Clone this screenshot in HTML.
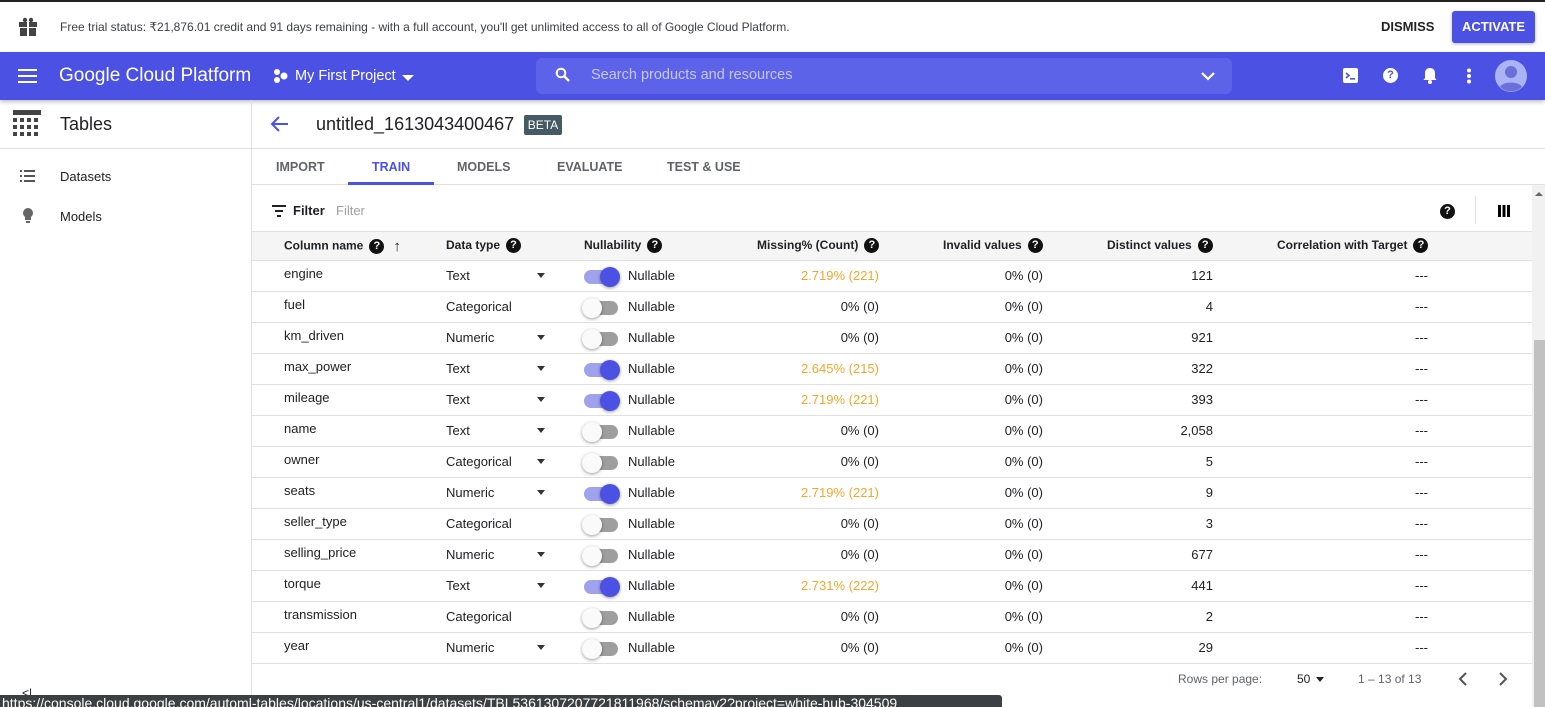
<!DOCTYPE html>
<html><head><meta charset="utf-8"><style>
*{box-sizing:border-box;margin:0;padding:0}
body{width:1545px;height:707px;overflow:hidden;font-family:"Liberation Sans",Arial,sans-serif;background:#fff;position:relative;color:#202124}
.abs{position:absolute}
.top{left:0;top:0;width:1545px;height:52px;border-top:2px solid #222;background:#fff}
.blue{left:0;top:52px;width:1545px;height:48px;background:#4a51e3;box-shadow:0 2px 4px rgba(0,0,0,.25)}
.w{color:#fff}
.hq{display:inline-block;width:15px;height:15px;border-radius:50%;background:#111;color:#fff;font-size:11px;font-weight:bold;text-align:center;line-height:15px;vertical-align:middle;margin-left:6px}
.row{position:absolute;left:252px;width:1280px;height:31px;border-bottom:1px solid #e0e0e0;font-size:13px}
.row span{position:absolute;top:7px}
.row .hd span{position:static}
.r{text-align:right}
.tog{position:absolute;left:332px;top:9px;width:34px;height:14px;border-radius:7px;background:#9e9e9e}
.tog i{position:absolute;left:-2px;top:-3px;width:20px;height:20px;border-radius:50%;background:#fafafa;box-shadow:0 1px 3px rgba(0,0,0,.4)}
.tog.on{background:#9fa3ee}.tog.on i{left:16px;background:#4a51e3}
.dd{position:absolute;left:285px;top:12px;border-left:4px solid transparent;border-right:4px solid transparent;border-top:5px solid #333}
.or{color:#f4a62a}
.hd{font-size:12px;font-weight:bold;position:absolute;top:6px;white-space:nowrap}
</style></head><body>
<div class="abs top">
 <svg class="abs" style="left:18px;top:15px" width="20" height="20" viewBox="0 0 20 20"><rect x="1" y="5" width="18" height="5" fill="#444"/><rect x="2" y="11" width="16" height="8" fill="#444"/><rect x="9" y="5" width="2" height="14" fill="#fff"/><circle cx="7" cy="3" r="2.2" fill="#444"/><circle cx="13" cy="3" r="2.2" fill="#444"/></svg>
 <div class="abs" style="left:60px;top:18px;font-size:12px;color:#3c4043">Free trial status: ₹21,876.01 credit and 91 days remaining - with a full account, you'll get unlimited access to all of Google Cloud Platform.</div>
 <div class="abs" style="left:1381px;top:17px;font-size:13px;font-weight:bold;color:#222">DISMISS</div>
 <div class="abs" style="left:1452px;top:9px;width:83px;height:32px;background:#4a51e3;color:#fff;border-radius:3px;font-size:13px;font-weight:bold;text-align:center;line-height:32px;box-shadow:0 1px 3px rgba(0,0,0,.3)">ACTIVATE</div>
</div>
<div class="abs blue">
 <svg class="abs" style="left:18px;top:16px" width="20" height="16"><rect y="1" width="19" height="2" fill="#fff"/><rect y="7" width="19" height="2" fill="#fff"/><rect y="13" width="19" height="2" fill="#fff"/></svg>
 <div class="abs w" style="left:59px;top:13px;font-size:19px">Google Cloud Platform</div>
 <svg class="abs" style="left:273px;top:16px" width="16" height="16"><circle cx="4" cy="4" r="3" fill="#fff"/><circle cx="4" cy="12" r="3" fill="#fff"/><circle cx="11" cy="8" r="3.5" fill="#fff"/></svg>
 <div class="abs w" style="left:295px;top:16px;font-size:14.5px">My First Project</div>
 <div class="abs" style="left:402px;top:23px;border-left:6px solid transparent;border-right:6px solid transparent;border-top:6px solid #fff"></div>
 <div class="abs" style="left:536px;top:6px;width:696px;height:36px;border-radius:6px;background:#5c63e8"></div>
 <svg class="abs" style="left:555px;top:15px" width="16" height="16"><circle cx="6" cy="6" r="4.3" stroke="#fff" stroke-width="2" fill="none"/><path d="M9 9l5 5" stroke="#fff" stroke-width="2.4"/></svg>
 <div class="abs" style="left:591px;top:15px;font-size:14.5px;color:#c5c8f5">Search products and resources</div>
 <svg class="abs" style="left:1200px;top:18px" width="16" height="12"><path d="M2 3l6 6 6-6" stroke="#fff" stroke-width="2.2" fill="none"/></svg>
 <svg class="abs" style="left:1343px;top:16px" width="16" height="16"><rect width="15" height="15" rx="2" fill="#fff"/><path d="M3 5l3 2.5-3 2.5" stroke="#4a51e3" stroke-width="1.6" fill="none"/><rect x="7" y="10" width="5" height="1.6" fill="#4a51e3"/></svg>
 <div class="abs" style="left:1383px;top:16px;width:15px;height:15px;border-radius:50%;background:#fff;color:#4a51e3;font-size:11px;font-weight:bold;text-align:center;line-height:15px">?</div>
 <svg class="abs" style="left:1423px;top:15px" width="14" height="18"><path d="M7 1c-3 0-5 2-5 5v5l-1.5 2h13L12 11V6c0-3-2-5-5-5z" fill="#fff"/><circle cx="7" cy="15" r="2" fill="#fff"/></svg>
 <svg class="abs" style="left:1466px;top:16px" width="6" height="16"><circle cx="3" cy="2.5" r="2" fill="#fff"/><circle cx="3" cy="8" r="2" fill="#fff"/><circle cx="3" cy="13.5" r="2" fill="#fff"/></svg>
 <svg class="abs" style="left:1495px;top:8px" width="32" height="32"><circle cx="16" cy="16" r="16" fill="#aab4f5"/><circle cx="16" cy="12" r="6" fill="#6a70d8"/><path d="M5 27c3-6 19-6 22 0a16 16 0 0 1-22 0z" fill="#6a70d8"/></svg>
</div>
<div class="abs" style="left:251px;top:100px;width:1px;height:607px;background:#e0e0e0"></div>
<div class="abs" style="left:0;top:148px;width:1545px;height:1px;background:#e0e0e0"></div>
<svg class="abs" style="left:12px;top:109px" width="30" height="30"><rect x="1" y="1" width="28" height="5" fill="#444"/><g fill="#444"><rect x="1" y="9" width="4" height="4"/><rect x="8" y="9" width="4" height="4"/><rect x="15" y="9" width="4" height="4"/><rect x="22" y="9" width="4" height="4"/><rect x="1" y="16" width="4" height="4"/><rect x="8" y="16" width="4" height="4"/><rect x="15" y="16" width="4" height="4"/><rect x="22" y="16" width="4" height="4"/><rect x="1" y="23" width="4" height="4"/><rect x="8" y="23" width="4" height="4"/><rect x="15" y="23" width="4" height="4"/><rect x="22" y="23" width="4" height="4"/></g></svg>
<div class="abs" style="left:60px;top:114px;font-size:18px">Tables</div>
<svg class="abs" style="left:20px;top:170px" width="16" height="13"><g fill="#555"><rect y="0" width="2" height="2"/><rect y="5" width="2" height="2"/><rect y="10" width="2" height="2"/><rect x="4" y="0" width="11" height="2"/><rect x="4" y="5" width="11" height="2"/><rect x="4" y="10" width="11" height="2"/></g></svg>
<div class="abs" style="left:60px;top:169px;font-size:13px">Datasets</div>
<svg class="abs" style="left:22px;top:208px" width="12" height="16"><circle cx="6" cy="5" r="5" fill="#666"/><rect x="3" y="7" width="6" height="5" fill="#666"/><rect x="4" y="13" width="4" height="2" fill="#666"/></svg>
<div class="abs" style="left:60px;top:209px;font-size:13px">Models</div>
<div class="abs" style="left:22px;top:686px;font-size:12px">&lt;|</div>
<svg class="abs" style="left:270px;top:115px" width="20" height="18"><path d="M18 9H3M9 2L2 9l7 7" stroke="#4a51e3" stroke-width="2" fill="none"/></svg>
<div class="abs" style="left:316px;top:114px;font-size:18px">untitled_1613043400467</div>
<div class="abs" style="left:524px;top:115px;width:38px;height:20px;background:#455a64;color:#fff;font-size:12px;text-align:center;line-height:20px;border-radius:2px">BETA</div>
<div class="abs" style="left:252px;top:184px;width:1293px;height:1px;background:#e0e0e0"></div>
<div class="abs" style="left:276px;top:160px;font-size:12.5px;font-weight:bold;color:#5f6368">IMPORT</div>
<div class="abs" style="left:372px;top:160px;font-size:12.5px;font-weight:bold;color:#4a51e3">TRAIN</div>
<div class="abs" style="left:348px;top:182px;width:86px;height:3px;background:#4a51e3"></div>
<div class="abs" style="left:457px;top:160px;font-size:12.5px;font-weight:bold;color:#5f6368">MODELS</div>
<div class="abs" style="left:557px;top:160px;font-size:12.5px;font-weight:bold;color:#5f6368">EVALUATE</div>
<div class="abs" style="left:667px;top:160px;font-size:12.5px;font-weight:bold;color:#5f6368">TEST &amp; USE</div>
<svg class="abs" style="left:272px;top:205px" width="14" height="12"><rect width="14" height="2" fill="#222"/><rect x="3" y="5" width="8" height="2" fill="#222"/><rect x="5" y="10" width="4" height="2" fill="#222"/></svg>
<div class="abs" style="left:293px;top:203px;font-size:13px;font-weight:bold">Filter</div>
<div class="abs" style="left:336px;top:203px;font-size:13px;color:#9e9e9e">Filter</div>
<div class="abs" style="left:1440px;top:203px"><span class="hq" style="margin:0">?</span></div>
<div class="abs" style="left:1475px;top:196px;width:1px;height:28px;background:#e0e0e0"></div>
<svg class="abs" style="left:1498px;top:205px" width="12" height="12"><rect width="3" height="12"/><rect x="4.5" width="3" height="12"/><rect x="9" width="3" height="12"/></svg>
<div class="abs" style="left:1532px;top:185px;width:13px;height:522px;background:#f1f1f1"></div>
<div class="abs" style="left:1534px;top:340px;width:11px;height:367px;background:#c1c1c1"></div>
<div class="abs" style="left:1535px;top:192px;border-left:4px solid transparent;border-right:4px solid transparent;border-bottom:4px solid #666"></div>
<div class="row" style="top:231px;height:30px;background:#f5f5f5;border-top:1px solid #e0e0e0">
 <div class="hd" style="left:32px">Column name<span class="hq">?</span><span style="margin-left:9px;font-size:15px;vertical-align:middle">↑</span></div>
 <div class="hd" style="left:194px">Data type<span class="hq">?</span></div>
 <div class="hd" style="left:332px">Nullability<span class="hq">?</span></div>
 <div class="hd" style="left:505px">Missing% (Count)<span class="hq">?</span></div>
 <div class="hd" style="left:691px">Invalid values<span class="hq">?</span></div>
 <div class="hd" style="left:855px">Distinct values<span class="hq">?</span></div>
 <div class="hd" style="left:1025px">Correlation with Target<span class="hq">?</span></div>
</div>
<div class="row" style="top:261px"><span style="left:32px;top:5px">engine</span><span style="left:194px">Text</span><i class="dd"></i><div class="tog on"><i></i></div><span style="left:376px">Nullable</span><span class="r or" style="right:653px">2.719% (221)</span><span class="r" style="right:489px">0% (0)</span><span class="r" style="right:319px">121</span><span style="left:1163px">---</span></div>
<div class="row" style="top:292px"><span style="left:32px;top:5px">fuel</span><span style="left:194px">Categorical</span><div class="tog"><i></i></div><span style="left:376px">Nullable</span><span class="r" style="right:653px">0% (0)</span><span class="r" style="right:489px">0% (0)</span><span class="r" style="right:319px">4</span><span style="left:1163px">---</span></div>
<div class="row" style="top:323px"><span style="left:32px;top:5px">km_driven</span><span style="left:194px">Numeric</span><i class="dd"></i><div class="tog"><i></i></div><span style="left:376px">Nullable</span><span class="r" style="right:653px">0% (0)</span><span class="r" style="right:489px">0% (0)</span><span class="r" style="right:319px">921</span><span style="left:1163px">---</span></div>
<div class="row" style="top:354px"><span style="left:32px;top:5px">max_power</span><span style="left:194px">Text</span><i class="dd"></i><div class="tog on"><i></i></div><span style="left:376px">Nullable</span><span class="r or" style="right:653px">2.645% (215)</span><span class="r" style="right:489px">0% (0)</span><span class="r" style="right:319px">322</span><span style="left:1163px">---</span></div>
<div class="row" style="top:385px"><span style="left:32px;top:5px">mileage</span><span style="left:194px">Text</span><i class="dd"></i><div class="tog on"><i></i></div><span style="left:376px">Nullable</span><span class="r or" style="right:653px">2.719% (221)</span><span class="r" style="right:489px">0% (0)</span><span class="r" style="right:319px">393</span><span style="left:1163px">---</span></div>
<div class="row" style="top:416px"><span style="left:32px;top:5px">name</span><span style="left:194px">Text</span><i class="dd"></i><div class="tog"><i></i></div><span style="left:376px">Nullable</span><span class="r" style="right:653px">0% (0)</span><span class="r" style="right:489px">0% (0)</span><span class="r" style="right:319px">2,058</span><span style="left:1163px">---</span></div>
<div class="row" style="top:447px"><span style="left:32px;top:5px">owner</span><span style="left:194px">Categorical</span><i class="dd"></i><div class="tog"><i></i></div><span style="left:376px">Nullable</span><span class="r" style="right:653px">0% (0)</span><span class="r" style="right:489px">0% (0)</span><span class="r" style="right:319px">5</span><span style="left:1163px">---</span></div>
<div class="row" style="top:478px"><span style="left:32px;top:5px">seats</span><span style="left:194px">Numeric</span><i class="dd"></i><div class="tog on"><i></i></div><span style="left:376px">Nullable</span><span class="r or" style="right:653px">2.719% (221)</span><span class="r" style="right:489px">0% (0)</span><span class="r" style="right:319px">9</span><span style="left:1163px">---</span></div>
<div class="row" style="top:509px"><span style="left:32px;top:5px">seller_type</span><span style="left:194px">Categorical</span><div class="tog"><i></i></div><span style="left:376px">Nullable</span><span class="r" style="right:653px">0% (0)</span><span class="r" style="right:489px">0% (0)</span><span class="r" style="right:319px">3</span><span style="left:1163px">---</span></div>
<div class="row" style="top:540px"><span style="left:32px;top:5px">selling_price</span><span style="left:194px">Numeric</span><i class="dd"></i><div class="tog"><i></i></div><span style="left:376px">Nullable</span><span class="r" style="right:653px">0% (0)</span><span class="r" style="right:489px">0% (0)</span><span class="r" style="right:319px">677</span><span style="left:1163px">---</span></div>
<div class="row" style="top:571px"><span style="left:32px;top:5px">torque</span><span style="left:194px">Text</span><i class="dd"></i><div class="tog on"><i></i></div><span style="left:376px">Nullable</span><span class="r or" style="right:653px">2.731% (222)</span><span class="r" style="right:489px">0% (0)</span><span class="r" style="right:319px">441</span><span style="left:1163px">---</span></div>
<div class="row" style="top:602px"><span style="left:32px;top:5px">transmission</span><span style="left:194px">Categorical</span><div class="tog"><i></i></div><span style="left:376px">Nullable</span><span class="r" style="right:653px">0% (0)</span><span class="r" style="right:489px">0% (0)</span><span class="r" style="right:319px">2</span><span style="left:1163px">---</span></div>
<div class="row" style="top:633px"><span style="left:32px;top:5px">year</span><span style="left:194px">Numeric</span><i class="dd"></i><div class="tog"><i></i></div><span style="left:376px">Nullable</span><span class="r" style="right:653px">0% (0)</span><span class="r" style="right:489px">0% (0)</span><span class="r" style="right:319px">29</span><span style="left:1163px">---</span></div>
<div class="abs" style="left:1178px;top:672px;font-size:12px;color:#5f6368">Rows per page:</div>
<div class="abs" style="left:1297px;top:672px;font-size:12px">50</div>
<div class="abs" style="left:1316px;top:677px;border-left:4px solid transparent;border-right:4px solid transparent;border-top:5px solid #222"></div>
<div class="abs" style="left:1358px;top:672px;font-size:12px;color:#5f6368">1 – 13 of 13</div>
<svg class="abs" style="left:1457px;top:671px" width="12" height="16"><path d="M9 2L3 8l6 6" stroke="#555" stroke-width="2" fill="none"/></svg>
<svg class="abs" style="left:1497px;top:671px" width="12" height="16"><path d="M3 2l6 6-6 6" stroke="#555" stroke-width="2" fill="none"/></svg>
<div class="abs" style="left:0;top:695px;width:1002px;height:12px;background:#3c4043;color:#fff;font-size:14px;line-height:20px;padding-left:2px;border-radius:0 3px 0 0;overflow:hidden;white-space:nowrap"><div style="margin-top:-2px">https://console.cloud.google.com/automl-tables/locations/us-central1/datasets/TBL5361307207721811968/schemav2?project=white-hub-304509</div></div>
</body></html>
